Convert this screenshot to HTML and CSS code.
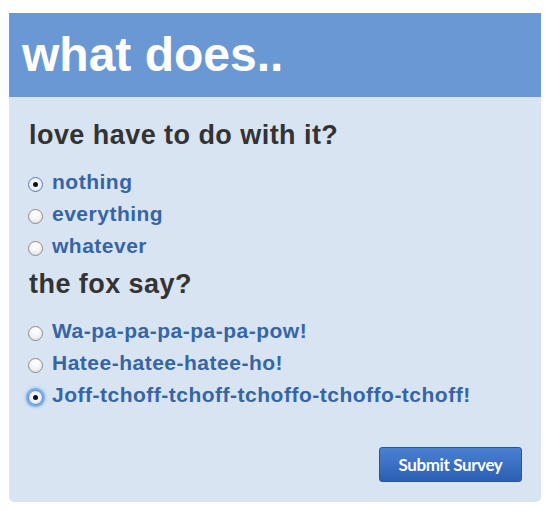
FILE: index.html
```html
<!DOCTYPE html>
<html>
<head>
<meta charset="utf-8">
<link rel="stylesheet" href="styles.css">
</head>
<body>
<div class="survey">
  <h1 class="title">what does..</h1>
  <form class="panel">
    <h2 class="question">love have to do with it?</h2>
    <label class="option"><span class="radio checked"></span>nothing</label>
    <label class="option"><span class="radio"></span>everything</label>
    <label class="option"><span class="radio"></span>whatever</label>
    <h2 class="question q2">the fox say?</h2>
    <label class="option"><span class="radio"></span>Wa-pa-pa-pa-pa-pa-pow!</label>
    <label class="option"><span class="radio"></span>Hatee-hatee-hatee-ho!</label>
    <label class="option"><span class="radio checked focus"></span>Joff-tchoff-tchoff-tchoffo-tchoffo-tchoff!</label>
    <div class="actions"><button type="button" class="submit">Submit Survey</button></div>
  </form>
</div>
</body>
</html>
```
FILE: styles.css
```css
* { box-sizing: border-box; }
body { margin: 0; background: #fff; font-family: "Liberation Sans", Arial, sans-serif; }
.survey { margin: 13px 8px 0 9px; width: 532px; }
.title {
  margin: 0; height: 84px; background: #6a98d4; color: #fff;
  font-size: 48px; font-weight: bold; line-height: 84px; padding-left: 13px;
}
.panel {
  background: #d9e4f3; border-radius: 0 0 5px 5px;
  padding: 22px 19px 20px 19px; display: flex; flex-direction: column;
}
.question {
  margin: 0 0 15px 1px; font-size: 27px; line-height: 32px; color: #333; font-weight: bold;
  letter-spacing: 0.45px;
}
.q2 { margin-top: 6px; }
.option {
  display: flex; align-items: center; height: 32px; font-size: 21px; font-weight: bold;
  color: #3665a6; letter-spacing: 0.5px;
}
.radio {
  width: 15px; height: 15px; border-radius: 50%; margin-right: 9px; flex: none;
  border: 1px solid #8c8c8c;
  background: radial-gradient(circle at 50% 30%, #ffffff 0%, #f4f4f4 50%, #d8d8d8 100%);
  position: relative; top: 2px;
}
.radio.checked {
  border-color: #5a7fb8;
  background: radial-gradient(circle at 50% 45%, #fff 0%, #e6eefa 60%, #b9cde9 100%);
}
.radio.checked::after {
  content: ""; position: absolute; left: 4px; top: 4px; width: 5px; height: 5px;
  border-radius: 50%; background: #111;
}
.radio.focus { box-shadow: 0 0 0 2px #7eaee8, 0 0 3px 3px #a9caef; }
.actions { display: flex; justify-content: flex-end; margin-top: 36px; }
.submit {
  width: 143px; height: 35px;
  border: 1px solid #2a56a0; border-radius: 3px;
  background: linear-gradient(#4a80d2, #2c5fb3);
  color: #fff; font-family: Lato, "Liberation Sans", sans-serif; font-weight: bold; font-size: 17px;
  letter-spacing: -0.4px; padding: 0;
}
```
